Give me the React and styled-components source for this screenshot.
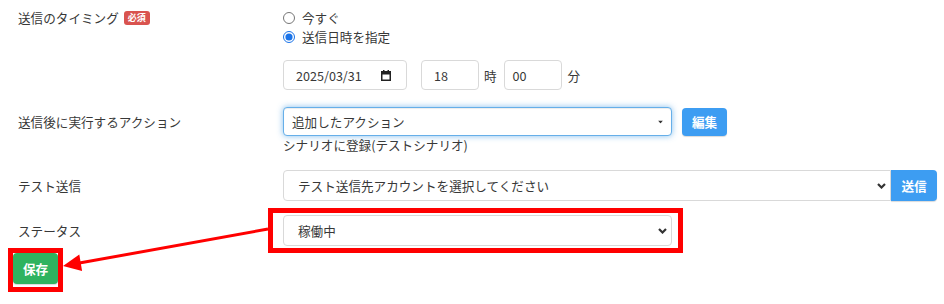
import React from "react";
import styled, { createGlobalStyle } from "styled-components";

const Global = createGlobalStyle`
  html, body { margin: 0; padding: 0; background: #fff; }
  body {
    font-family: "Noto Sans CJK JP", "Noto Sans", sans-serif;
    font-size: 12.6px;
    color: #383838;
  }
  * { box-sizing: border-box; }
`;

const Page = styled.div`
  position: relative;
  width: 944px;
  height: 304px;
  overflow: hidden;
  padding-top: 8px;
`;

const Row = styled.div`
  display: grid;
  grid-template-columns: 265px 1fr;
  padding: 0 7px 0 18px;
  margin-top: ${(p) => p.$mt || 0}px;
  align-items: start;
`;

const Label = styled.div`
  display: flex;
  align-items: center;
  gap: 5px;
  height: ${(p) => p.$h}px;
  line-height: ${(p) => p.$h}px;
  white-space: nowrap;
`;

const Badge = styled.span`
  display: inline-block;
  background: #d9534f;
  color: #fff;
  font-size: 9px;
  font-weight: 700;
  line-height: 14px;
  height: 14px;
  padding: 0 4px;
  border-radius: 3px;
`;

const Controls = styled.div`
  display: flex;
  flex-direction: column;
`;

const RadioLine = styled.label`
  display: flex;
  align-items: center;
  gap: 7px;
  height: 19px;
  line-height: 19px;
`;

const Radio = styled.input.attrs({ type: "radio" })`
  margin: 0;
  width: 12px;
  height: 12px;
  accent-color: #1a73e8;
`;

const DateRow = styled.div`
  display: flex;
  align-items: center;
  margin-top: 14px;
`;

const TextBox = styled.div`
  display: flex;
  align-items: center;
  justify-content: space-between;
  width: ${(p) => p.$w}px;
  height: 30px;
  padding: 0 ${(p) => p.$pr || 8}px 0 ${(p) => p.$pl || 8}px;
  border: 1px solid #d9d9d9;
  border-radius: 4px;
  background: #fff;
  margin-left: ${(p) => p.$ml || 0}px;
`;

const Unit = styled.span`
  margin: 0 ${(p) => p.$mr || 0}px 0 ${(p) => p.$ml || 0}px;
`;

const InlineGroup = styled.div`
  display: flex;
  align-items: center;
  gap: ${(p) => p.$gap || 0}px;
`;

const SelectWrap = styled.div`
  position: relative;
  display: flex;
  width: ${(p) => (p.$w ? `${p.$w}px` : "auto")};
  flex: ${(p) => (p.$grow ? 1 : "none")};
`;

const Select = styled.div`
  flex: 1;
  display: flex;
  align-items: center;
  height: ${(p) => p.$h}px;
  padding-left: ${(p) => p.$pl}px;
  border: 1px solid ${(p) => (p.$focus ? "#66afe9" : "#d9d9d9")};
  border-radius: ${(p) => (p.$group ? "4px 0 0 4px" : "4px")};
  box-shadow: ${(p) =>
    p.$focus
      ? "inset 0 1px 1px rgba(0,0,0,.075), 0 0 6px rgba(102,175,233,.8)"
      : "none"};
  background: #fff;
  white-space: nowrap;
`;

const Caret = styled.svg`
  position: absolute;
  right: ${(p) => p.$r}px;
  top: 50%;
  transform: translateY(-50%);
`;

const Button = styled.button`
  border: none;
  margin: 0;
  height: ${(p) => p.$h}px;
  width: ${(p) => p.$w}px;
  padding: 0;
  background: ${(p) => p.$bg};
  color: #fff;
  font-family: inherit;
  font-size: 12.6px;
  font-weight: 700;
  border-radius: ${(p) => p.$radius || "4px"};
  box-shadow: 0 1px 1px rgba(0, 0, 0, 0.15);
`;

const SubText = styled.div`
  line-height: 18px;
  height: 18px;
`;

const SaveRow = styled.div`
  padding-left: 13px;
  margin-top: 7px;
`;

const Overlay = styled.svg`
  position: absolute;
  left: 0;
  top: 0;
  pointer-events: none;
`;

function Chevron() {
  return (
    <Caret $r={5} width="9" height="6" viewBox="0 0 9 6">
      <path d="M1 1 L4.5 4.5 L8 1" fill="none" stroke="#333" strokeWidth="2.2" />
    </Caret>
  );
}

export default function App() {
  return (
    <Page>
      <Global />
      <Row>
        <Label $h={19}>
          送信のタイミング<Badge>必須</Badge>
        </Label>
        <Controls>
          <RadioLine>
            <Radio name="t" />
            今すぐ
          </RadioLine>
          <RadioLine>
            <Radio name="t" defaultChecked />
            送信日時を指定
          </RadioLine>
          <DateRow>
            <TextBox $w={124} $pl={12} $pr={15}>
              2025/03/31
              <svg width="10" height="11" viewBox="0 0 10 11">
                <rect x="0.75" y="1.75" width="8.5" height="8.5" fill="none" stroke="#222" strokeWidth="1.5" />
                <rect x="0.5" y="1.5" width="9" height="3" fill="#222" />
                <rect x="2" y="0" width="1.5" height="2" fill="#222" />
                <rect x="6.5" y="0" width="1.5" height="2" fill="#222" />
              </svg>
            </TextBox>
            <TextBox $w={58} $pl={12} $ml={14}>
              18
            </TextBox>
            <Unit $ml={5} $mr={7}>時</Unit>
            <TextBox $w={58} $pl={8}>
              00
            </TextBox>
            <Unit $ml={6}>分</Unit>
          </DateRow>
        </Controls>
      </Row>

      <Row $mt={17}>
        <Label $h={29}>送信後に実行するアクション</Label>
        <Controls>
          <InlineGroup $gap={10}>
            <SelectWrap $w={389}>
              <Select $h={29} $pl={8} $focus>
                追加したアクション
              </Select>
              <Caret $r={9} width="5" height="3" viewBox="0 0 5 3">
                <path d="M0 0 L5 0 L2.5 3 Z" fill="#333" />
              </Caret>
            </SelectWrap>
            <Button $bg="#3d9df2" $w={45} $h={28}>
              編集
            </Button>
          </InlineGroup>
          <SubText>シナリオに登録(テストシナリオ)</SubText>
        </Controls>
      </Row>

      <Row $mt={16}>
        <Label $h={31}>テスト送信</Label>
        <InlineGroup>
          <SelectWrap $grow>
            <Select $h={31} $pl={14} $group>
              テスト送信先アカウントを選択してください
            </Select>
            <Chevron />
          </SelectWrap>
          <Button $bg="#3d9df2" $w={46} $h={31} $radius="0 4px 4px 0">
            送信
          </Button>
        </InlineGroup>
      </Row>

      <Row $mt={14}>
        <Label $h={31}>ステータス</Label>
        <SelectWrap $w={389}>
          <Select $h={31} $pl={14}>
            稼働中
          </Select>
          <Chevron />
        </SelectWrap>
      </Row>

      <SaveRow>
        <Button $bg="#2fb35f" $w={45} $h={31}>
          保存
        </Button>
      </SaveRow>

      <Overlay width="944" height="304" viewBox="0 0 944 304">
        <rect x="270.5" y="210.5" width="410" height="40" fill="none" stroke="#ff0000" strokeWidth="5" />
        <rect x="10.5" y="250.5" width="50" height="39" fill="none" stroke="#ff0000" strokeWidth="5" />
        <line x1="268" y1="229" x2="78" y2="263.3" stroke="#ff0000" strokeWidth="3" />
        <polygon points="63,266 82.1,271 79.3,254.5" fill="#ff0000" />
      </Overlay>
    </Page>
  );
}
